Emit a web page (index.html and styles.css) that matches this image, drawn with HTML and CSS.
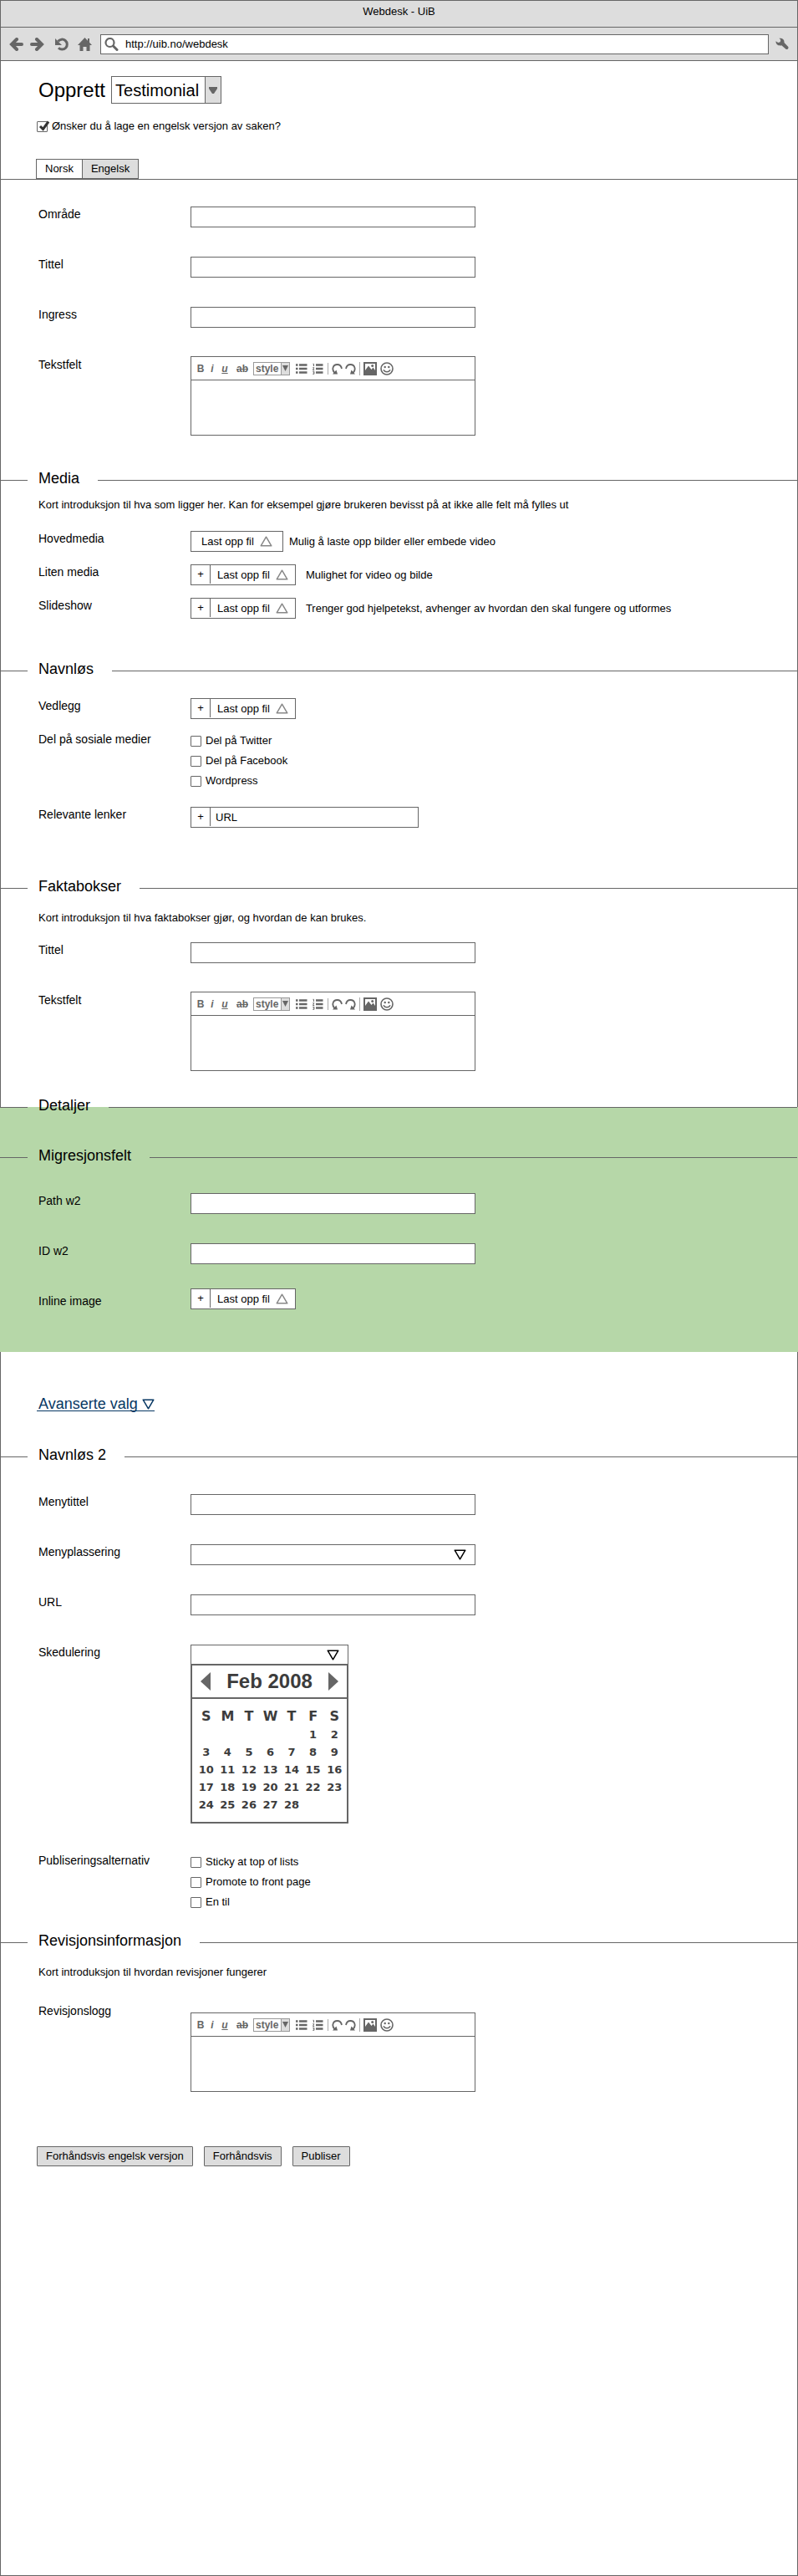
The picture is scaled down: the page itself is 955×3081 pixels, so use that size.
FILE: index.html
```html
<!DOCTYPE html>
<html lang="no">
<head>
<meta charset="utf-8">
<title>Webdesk - UiB</title>
<link rel="stylesheet" href="styles.css">
</head>
<body>
<svg class="sprite" aria-hidden="true">
  <symbol id="arrow-left" viewBox="0 0 17 16"><path d="M9 2 3 8l6 6M3.500 8H15" fill="none" stroke="currentColor" stroke-width="4" stroke-linecap="round"/></symbol>
  <symbol id="arrow-right" viewBox="0 0 17 16"><path d="M8 2l6 6-6 6M13.500 8H2" fill="none" stroke="currentColor" stroke-width="4" stroke-linecap="round"/></symbol>
  <symbol id="reload" viewBox="0 0 17 16"><path d="M4.500 4.500A6 6 0 1 1 5 12.300" fill="none" stroke="currentColor" stroke-width="3"/><path d="M1 1v8h8z" fill="currentColor"/></symbol>
  <symbol id="home" viewBox="0 0 17 16"><path d="M8.500 0 0 9h2.500v7h4v-5h4v5h4V9H17l-3-3.200V1h-2v2.700z" fill="currentColor"/></symbol>
  <symbol id="search" viewBox="0 0 17 16"><circle cx="6.500" cy="6" r="5" fill="none" stroke="currentColor" stroke-width="2.200"/><path d="M10.500 10l4.500 4.500" stroke="currentColor" stroke-width="3" stroke-linecap="round"/></symbol>
  <symbol id="wrench" viewBox="0 0 16 15"><path d="M4.500.8C8 0 11 2 10.500 6l4.800 5c.8 2-.8 3.500-2.500 3L7.300 9.200C4 10.200.3 8.500.5 4.200L3.200 6l2.500-.7.600-2.500z" fill="currentColor"/></symbol>
  <symbol id="up" viewBox="0 0 15 13"><path d="M7.500 1.200 13.800 11.800H1.200z" fill="none" stroke="currentColor" stroke-width="1.500" stroke-linejoin="round"/></symbol>
  <symbol id="down" viewBox="0 0 15 13"><path d="M1.200 1.200h12.600L7.500 11.800z" fill="none" stroke="currentColor" stroke-width="1.500" stroke-linejoin="round"/></symbol>
  <symbol id="ul" viewBox="0 0 14 14"><path d="M4 2.500h9.500M4 7h9.500M4 11.500h9.500" stroke="currentColor" stroke-width="2.500"/><path d="M0 2.500h2.500M0 7h2.500M0 11.500h2.500" stroke="currentColor" stroke-width="2.500"/></symbol>
  <symbol id="ol" viewBox="0 0 13 14"><path d="M4 2.500h8.500M4 7h8.500M4 11.500h8.500" stroke="currentColor" stroke-width="2.500"/><path d="M.5 1.300h1V4M.3 5.700h1.500L.5 8.500h1.700M.3 10.300h1.600v3H.3M.8 11.800h1" fill="none" stroke="currentColor"/></symbol>
  <symbol id="undo" viewBox="0 0 13 14"><path d="M3.500 12C-.5 8 1.500 2 6.500 2c3 0 5 2 5.500 5" fill="none" stroke="currentColor" stroke-width="1.800"/><path d="M1 13.500h6L5.500 8.500z" fill="currentColor"/></symbol>
  <symbol id="redo" viewBox="0 0 13 14"><path d="M9.500 12C13.500 8 11.500 2 6.500 2 3.500 2 1.500 4 1 7" fill="none" stroke="currentColor" stroke-width="1.800"/><path d="M12 13.500H6l1.500-5z" fill="currentColor"/></symbol>
  <symbol id="image" viewBox="0 0 16 16"><path d="M0 0h16v16H0z" fill="currentColor"/><path d="M2 2h12v8l-2.500-3.500L9.500 9 6 4.500 2 10z" fill="#fff"/><circle cx="10.700" cy="4.500" r="1.500" fill="currentColor"/></symbol>
  <symbol id="smile" viewBox="0 0 16 16"><circle cx="8" cy="8" r="7" fill="none" stroke="currentColor" stroke-width="1.600"/><circle cx="5.700" cy="6" r="1.200" fill="currentColor"/><circle cx="10.300" cy="6" r="1.200" fill="currentColor"/><path d="M4 9.200c1.500 3.300 6.500 3.300 8 0" fill="none" stroke="currentColor" stroke-width="1.500"/></symbol>
</svg>

<div class="window">
  <header>
    <div class="titlebar">Webdesk - UiB</div>
    <div class="navbar">
      <button class="icon-button" type="button" aria-label="Tilbake"><svg width="17" height="16"><use href="#arrow-left"/></svg></button>
      <button class="icon-button" type="button" aria-label="Frem"><svg width="17" height="16"><use href="#arrow-right"/></svg></button>
      <button class="icon-button" type="button" aria-label="Last på nytt"><svg width="17" height="16"><use href="#reload"/></svg></button>
      <button class="icon-button" type="button" aria-label="Hjem"><svg width="17" height="16"><use href="#home"/></svg></button>
      <div class="address"><svg width="17" height="16"><use href="#search"/></svg><input type="text" aria-label="Adresse" value="http://uib.no/webdesk"></div>
      <button class="icon-button wrench" type="button" aria-label="Innstillinger"><svg width="16" height="15"><use href="#wrench"/></svg></button>
    </div>
  </header>

  <main>
    <div class="page-head">
      <div class="create">
        <h1><label for="type">Opprett</label></h1>
        <div class="type-select">
          <select id="type"><option>Testimonial</option></select>
          <span class="type-arrow"><svg width="10" height="8" viewBox="0 0 10 8"><path d="M0 0h10v2L6 8H4L0 2z" fill="#666"/></svg></span>
        </div>
      </div>
      <label class="check check-head"><span class="tick"><input type="checkbox" checked><svg width="14" height="13" viewBox="0 0 14 13"><path d="M2 7l3.500 3.500L12 1.500" fill="none" stroke="#333" stroke-width="3"/></svg></span>Ønsker du å lage en engelsk versjon av saken?</label>
      <div class="tabs" role="tablist">
        <button type="button" role="tab" aria-selected="true">Norsk</button><button type="button" role="tab" aria-selected="false">Engelsk</button>
      </div>
    </div>

    <section class="basics">
      <div class="rows">
        <div class="row"><label for="omrade">Område</label><input class="text" id="omrade" type="text"></div>
        <div class="row"><label for="tittel">Tittel</label><input class="text" id="tittel" type="text"></div>
        <div class="row"><label for="ingress">Ingress</label><input class="text" id="ingress" type="text"></div>
        <div class="row"><label for="tekst">Tekstfelt</label>
          <div class="editor">
            <div class="toolbar">
              <button class="t-b" type="button">B</button><button class="t-i" type="button">i</button><button class="t-u" type="button">u</button><button class="t-s" type="button">ab</button>
              <span class="style-select"><select aria-label="Stil"><option>style</option></select><span><svg width="7" height="7" viewBox="0 0 7 7"><path d="M0 0h7L3.500 7z" fill="#666"/></svg></span></span>
              <button class="t-ul" type="button" aria-label="Punktliste"><svg width="14" height="14"><use href="#ul"/></svg></button>
              <button class="t-ol" type="button" aria-label="Nummerert liste"><svg width="13" height="14"><use href="#ol"/></svg></button>
              <button class="t-undo" type="button" aria-label="Angre"><svg width="13" height="14"><use href="#undo"/></svg></button>
              <button class="t-redo" type="button" aria-label="Gjør om"><svg width="13" height="14"><use href="#redo"/></svg></button>
              <button class="t-img" type="button" aria-label="Bilde"><svg width="16" height="16"><use href="#image"/></svg></button>
              <button class="t-smile" type="button" aria-label="Smilefjes"><svg width="16" height="16"><use href="#smile"/></svg></button>
            </div>
            <textarea id="tekst"></textarea>
          </div>
        </div>
      </div>
    </section>

    <section class="media">
      <h2><span>Media</span></h2>
      <p>Kort introduksjon til hva som ligger her. Kan for eksempel gjøre brukeren bevisst på at ikke alle felt må fylles ut</p>
      <div class="rows rows-tight">
        <div class="row"><span class="label">Hovedmedia</span><div class="with-hint"><button class="upload upload-single" type="button">Last opp fil<svg width="15" height="13"><use href="#up"/></svg></button><span>Mulig å laste opp bilder eller embede video</span></div></div>
        <div class="row"><span class="label">Liten media</span><div class="with-hint with-hint-wide"><div class="combo"><button class="plus" type="button">+</button><button class="upload" type="button">Last opp fil<svg width="15" height="13"><use href="#up"/></svg></button></div><span>Mulighet for video og bilde</span></div></div>
        <div class="row"><span class="label">Slideshow</span><div class="with-hint with-hint-wide"><div class="combo"><button class="plus" type="button">+</button><button class="upload" type="button">Last opp fil<svg width="15" height="13"><use href="#up"/></svg></button></div><span>Trenger god hjelpetekst, avhenger av hvordan den skal fungere og utformes</span></div></div>
      </div>
    </section>

    <section class="sharing">
      <h2><span>Navnløs</span></h2>
      <div class="rows rows-tight">
        <div class="row"><span class="label">Vedlegg</span><div class="combo"><button class="plus" type="button">+</button><button class="upload" type="button">Last opp fil<svg width="15" height="13"><use href="#up"/></svg></button></div></div>
        <div class="row"><span class="label">Del på sosiale medier</span>
          <div class="checks">
            <label class="check"><input type="checkbox">Del på Twitter</label>
            <label class="check"><input type="checkbox">Del på Facebook</label>
            <label class="check"><input type="checkbox">Wordpress</label>
          </div>
        </div>
        <div class="row"><label for="lenke">Relevante lenker</label><div class="combo combo-link"><button class="plus" type="button">+</button><input id="lenke" type="text" value="URL"></div></div>
      </div>
    </section>

    <section class="facts">
      <h2><span>Faktabokser</span></h2>
      <p>Kort introduksjon til hva faktabokser gjør, og hvordan de kan brukes.</p>
      <div class="rows">
        <div class="row"><label for="fakta-tittel">Tittel</label><input class="text" id="fakta-tittel" type="text"></div>
        <div class="row"><label for="fakta-tekst">Tekstfelt</label>
          <div class="editor">
            <div class="toolbar">
              <button class="t-b" type="button">B</button><button class="t-i" type="button">i</button><button class="t-u" type="button">u</button><button class="t-s" type="button">ab</button>
              <span class="style-select"><select aria-label="Stil"><option>style</option></select><span><svg width="7" height="7" viewBox="0 0 7 7"><path d="M0 0h7L3.500 7z" fill="#666"/></svg></span></span>
              <button class="t-ul" type="button" aria-label="Punktliste"><svg width="14" height="14"><use href="#ul"/></svg></button>
              <button class="t-ol" type="button" aria-label="Nummerert liste"><svg width="13" height="14"><use href="#ol"/></svg></button>
              <button class="t-undo" type="button" aria-label="Angre"><svg width="13" height="14"><use href="#undo"/></svg></button>
              <button class="t-redo" type="button" aria-label="Gjør om"><svg width="13" height="14"><use href="#redo"/></svg></button>
              <button class="t-img" type="button" aria-label="Bilde"><svg width="16" height="16"><use href="#image"/></svg></button>
              <button class="t-smile" type="button" aria-label="Smilefjes"><svg width="16" height="16"><use href="#smile"/></svg></button>
            </div>
            <textarea id="fakta-tekst"></textarea>
          </div>
        </div>
      </div>
    </section>

    <section class="details">
      <h2><span>Detaljer</span></h2>
      <h2 class="migration"><span>Migresjonsfelt</span></h2>
      <div class="rows">
        <div class="row"><label for="path">Path w2</label><input class="text" id="path" type="text"></div>
        <div class="row"><label for="idw2">ID w2</label><input class="text" id="idw2" type="text"></div>
        <div class="row row-raised"><span class="label">Inline image</span><div class="combo"><button class="plus" type="button">+</button><button class="upload" type="button">Last opp fil<svg width="15" height="13"><use href="#up"/></svg></button></div></div>
      </div>
    </section>

    <a class="advanced" href="#menu">Avanserte valg<svg width="15" height="13"><use href="#down"/></svg></a>

    <section class="menu" id="menu">
      <h2><span>Navnløs 2</span></h2>
      <div class="rows">
        <div class="row"><label for="menytittel">Menytittel</label><input class="text" id="menytittel" type="text"></div>
        <div class="row"><label for="plassering">Menyplassering</label><div class="select"><select id="plassering"><option></option></select><svg width="15" height="13"><use href="#down"/></svg></div></div>
        <div class="row"><label for="url">URL</label><input class="text" id="url" type="text"></div>
        <div class="row"><label for="dato">Skedulering</label>
          <div class="schedule">
            <div class="select"><select id="dato"><option></option></select><svg width="15" height="13"><use href="#down"/></svg></div>
            <div class="calendar">
              <div class="month">
                <button type="button" aria-label="Forrige måned"><svg width="12" height="22" viewBox="0 0 12 22"><path d="M12 0v22L0 11z" fill="#666"/></svg></button>
                <strong>Feb 2008</strong>
                <button type="button" aria-label="Neste måned"><svg width="12" height="22" viewBox="0 0 12 22"><path d="M0 0v22l12-11z" fill="#666"/></svg></button>
              </div>
              <table>
                <thead><tr><th>S</th><th>M</th><th>T</th><th>W</th><th>T</th><th>F</th><th>S</th></tr></thead>
                <tbody>
                  <tr><td></td><td></td><td></td><td></td><td></td><td>1</td><td>2</td></tr>
                  <tr><td>3</td><td>4</td><td>5</td><td>6</td><td>7</td><td>8</td><td>9</td></tr>
                  <tr><td>10</td><td>11</td><td>12</td><td>13</td><td>14</td><td>15</td><td>16</td></tr>
                  <tr><td>17</td><td>18</td><td>19</td><td>20</td><td>21</td><td>22</td><td>23</td></tr>
                  <tr><td>24</td><td>25</td><td>26</td><td>27</td><td>28</td><td></td><td></td></tr>
                </tbody>
              </table>
            </div>
          </div>
        </div>
        <div class="row"><span class="label">Publiseringsalternativ</span>
          <div class="checks">
            <label class="check"><input type="checkbox">Sticky at top of lists</label>
            <label class="check"><input type="checkbox">Promote to front page</label>
            <label class="check"><input type="checkbox">En til</label>
          </div>
        </div>
      </div>
    </section>

    <section class="revision">
      <h2><span>Revisjonsinformasjon</span></h2>
      <p>Kort introduksjon til hvordan revisjoner fungerer</p>
      <div class="rows">
        <div class="row row-lowered"><label for="logg">Revisjonslogg</label>
          <div class="editor">
            <div class="toolbar">
              <button class="t-b" type="button">B</button><button class="t-i" type="button">i</button><button class="t-u" type="button">u</button><button class="t-s" type="button">ab</button>
              <span class="style-select"><select aria-label="Stil"><option>style</option></select><span><svg width="7" height="7" viewBox="0 0 7 7"><path d="M0 0h7L3.500 7z" fill="#666"/></svg></span></span>
              <button class="t-ul" type="button" aria-label="Punktliste"><svg width="14" height="14"><use href="#ul"/></svg></button>
              <button class="t-ol" type="button" aria-label="Nummerert liste"><svg width="13" height="14"><use href="#ol"/></svg></button>
              <button class="t-undo" type="button" aria-label="Angre"><svg width="13" height="14"><use href="#undo"/></svg></button>
              <button class="t-redo" type="button" aria-label="Gjør om"><svg width="13" height="14"><use href="#redo"/></svg></button>
              <button class="t-img" type="button" aria-label="Bilde"><svg width="16" height="16"><use href="#image"/></svg></button>
              <button class="t-smile" type="button" aria-label="Smilefjes"><svg width="16" height="16"><use href="#smile"/></svg></button>
            </div>
            <textarea id="logg"></textarea>
          </div>
        </div>
      </div>
    </section>

    <div class="actions">
      <button type="button">Forhåndsvis engelsk versjon</button>
      <button type="button">Forhåndsvis</button>
      <button type="button">Publiser</button>
    </div>
  </main>
</div>
</body>
</html>
```
FILE: styles.css
```css
:root {
  --line: #666;
  --gray: #ddd;
  --green: #b6d7a8;
}

* { box-sizing: border-box; }

body {
  margin: 0;
  background: #fff;
  color: #000;
  font: 13px/18px Helvetica, Arial, "Liberation Sans", sans-serif;
}

button, input, select, textarea {
  margin: 0;
  padding: 0;
  border: 0;
  border-radius: 0;
  background: none;
  color: inherit;
  font: inherit;
  appearance: none;
}

svg { display: block; flex: none; }
.sprite { position: absolute; width: 0; height: 0; }

.window {
  min-height: 100vh;
  border: 1px solid var(--line);
}

/* Browser chrome */
.titlebar {
  height: 32px;
  padding-top: 4px;
  border-bottom: 1px solid var(--line);
  background: var(--gray);
  text-align: center;
}
.navbar {
  display: grid;
  grid-template-columns: 25px 29px 28px 27px 1fr 34px;
  align-items: center;
  height: 40px;
  padding-left: 10px;
  border-bottom: 1px solid var(--line);
  background: var(--gray);
  color: var(--line);
}
.wrench { padding-left: 8px; }
.address {
  display: flex;
  align-items: center;
  gap: 8px;
  height: 24px;
  padding-left: 4px;
  border: 1px solid var(--line);
  background: #fff;
}
.address input { flex: 1; color: #000; }

/* Page head */
.page-head {
  padding: 18px 0 0 43px;
  border-bottom: 1px solid var(--line);
}
.create { display: flex; align-items: center; gap: 7px; padding-left: 2px; }
h1 { margin: 0; font-size: 24px; line-height: 32px; font-weight: 400; }
.type-select {
  display: grid;
  grid-template-columns: 111px 19px;
  height: 33px;
  border: 1px solid var(--line);
}
.type-select select {
  grid-area: 1 / 1 / 2 / 3;
  padding-left: 4px;
  font-size: 20px;
}
.type-arrow {
  grid-area: 1 / 2;
  display: grid;
  place-items: center;
  border-left: 1px solid var(--line);
  background: var(--gray);
  pointer-events: none;
}
.check { display: flex; align-items: center; gap: 5px; width: max-content; line-height: 24px; }
.check input {
  display: block;
  width: 13px;
  height: 13px;
  border: 1px solid var(--line);
  border-radius: 1px;
  background: #fff;
}
.checks { margin-top: -1px; }
.check-head { margin-top: 18px; line-height: 18px; }
.tick { position: relative; }
.tick svg { position: absolute; left: 2px; bottom: 1px; }
.tabs { display: flex; margin: 30px 0 0 -1px; }
.tabs button {
  height: 24px;
  padding: 0 10px;
  border: 1px solid var(--line);
}
.tabs button + button { margin-left: -1px; background: var(--gray); }

/* Sections */
h2 {
  display: flex;
  align-items: center;
  height: 24px;
  margin: 0;
  font-size: 18px;
  line-height: 20px;
  font-weight: 400;
}
h2::before, h2::after { content: ""; height: 1px; background: var(--line); }
h2::before { width: 32px; }
h2::after { flex: 1; }
h2 span { padding: 0 22px 4px 13px; }
p { margin: 15px 45px 20px; }

.rows { display: grid; gap: 35px; padding-left: 45px; }
.rows-tight { gap: 15px; }
.row {
  display: grid;
  grid-template-columns: 182px 1fr;
  align-items: start;
  justify-items: start;
}
.row > label, .label { font-size: 14px; }
.row-raised { margin-top: -6px; }
.row-raised .label { padding-top: 6px; }
.row-lowered .editor { margin-top: 11px; }

.text, .row > .select, .editor { width: 341px; }
.text { height: 25px; padding: 0 6px; border: 1px solid var(--line); background: #fff; }
.select {
  display: grid;
  grid-template-columns: 1fr 25px;
  align-items: center;
  height: 25px;
  border: 1px solid var(--line);
}
.select select { grid-area: 1 / 1 / 2 / 3; height: 100%; }
.select svg { grid-area: 1 / 2; pointer-events: none; }

/* Rich text editor */
.editor { margin-top: -1px; border: 1px solid var(--line); }
.toolbar {
  display: flex;
  align-items: center;
  height: 28px;
  padding-left: 4px;
  border-bottom: 1px solid var(--line);
  color: var(--line);
  font-size: 12px;
  line-height: 14px;
  font-weight: 700;
}
.editor textarea { display: block; width: 100%; height: 65px; padding: 4px 6px; resize: none; }
.t-b, .t-i { width: 14px; }
.t-u { width: 16px; text-decoration: underline; }
.t-s { width: 26px; text-decoration: line-through; }
.t-i, .t-u { font-style: italic; }
.style-select {
  display: grid;
  grid-template-columns: 32px 10px;
  height: 16px;
  border: 1px solid #999;
}
.style-select select { grid-area: 1 / 1 / 2 / 3; padding-left: 2px; }
.style-select > span {
  grid-area: 1 / 2;
  display: grid;
  place-items: center;
  border-left: 1px solid #999;
  background: var(--gray);
  pointer-events: none;
}
.t-ul { margin-left: 7px; }
.t-ol { margin: 0 5px 0 6px; }
.t-undo { padding-left: 4px; border-left: 1px solid #aaa; }
.t-redo { margin: 0 4px 0 3px; }
.t-img { padding-left: 4px; border-left: 1px solid #aaa; }
.t-smile { margin-left: 4px; }

/* Upload controls */
.combo, .upload-single { height: 25px; border: 1px solid var(--line); background: #fff; }
.combo { display: flex; }
.plus { width: 23px; height: 22px; border-right: 1px solid var(--line); }
.upload { display: flex; align-items: center; gap: 7px; padding: 0 8px; }
.upload svg { color: #888; }
.upload-single { padding: 0 12px; }
.combo-link { width: 273px; }
.combo-link input { flex: 1; min-width: 0; padding-left: 6px; }
.with-hint { display: flex; align-items: center; gap: 7px; }
.with-hint-wide { gap: 12px; }

/* Section spacing */
.basics { padding: 32px 0 41px; }
.media { padding-bottom: 50px; }
.media p { margin: 9px 45px 22px; }
.sharing { padding-bottom: 60px; }
.sharing .rows { padding-top: 21px; }
.sharing .checks { padding-bottom: 4px; }
.facts { padding-bottom: 43px; }
.details {
  display: flow-root;
  margin: 0 -1px;
  padding: 0 1px 51px;
  background: var(--green);
}
.details h2 { margin: -12px 0 0 -1px; }
.details h2::before { width: 33px; }
.details .migration { margin: 36px 0 31px -1px; }

.advanced {
  display: flex;
  align-items: center;
  gap: 5px;
  width: max-content;
  margin: 55px 0 42px 43px;
  padding-left: 2px;
  border-bottom: 1px solid #073763;
  color: #073763;
  font-size: 18px;
  line-height: 15px;
  text-decoration: none;
}
.menu { padding-bottom: 24px; }
.menu .rows { padding-top: 33px; }

.schedule { width: 189px; }
.schedule .select { height: 23px; border-bottom: 0; }
.calendar {
  border: 2px solid var(--line);
  color: #3c3c3c;
  font-family: "DejaVu Sans", Verdana, sans-serif;
}
.month {
  display: flex;
  align-items: center;
  justify-content: space-between;
  height: 40px;
  padding: 0 10px;
  border-bottom: 2px solid var(--line);
}
.month strong { font: 700 24px/28px Helvetica, Arial, "Liberation Sans", sans-serif; }
table {
  width: calc(100% - 6px);
  margin: 10px 2px 10px 4px;
  border-collapse: collapse;
  table-layout: fixed;
}
th, td { padding: 0; text-align: center; font-weight: 700; }
th { height: 22px; font-size: 16px; line-height: 22px; }
td { height: 21px; font-size: 13px; line-height: 21px; }

.revision p { margin-bottom: 28px; }
.actions { display: flex; gap: 13px; padding: 65px 0 40px 43px; }
.actions button {
  height: 24px;
  padding: 0 10px;
  border: 1px solid var(--line);
  border-radius: 1px;
  background: var(--gray);
}
```
